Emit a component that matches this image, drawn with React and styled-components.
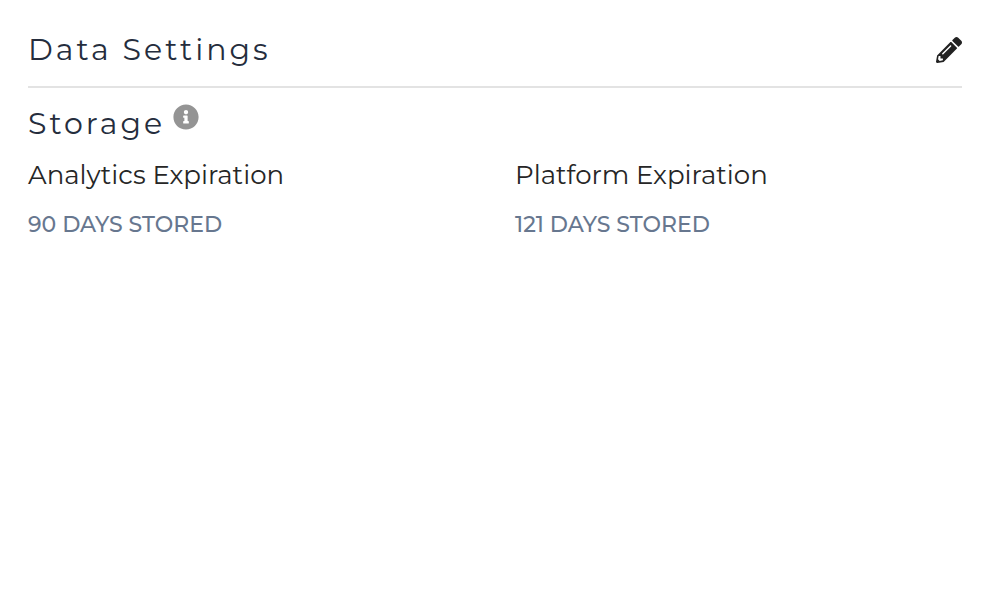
import React from "react";
import styled, { createGlobalStyle } from "styled-components";
import { FaInfoCircle, FaPencilAlt } from "react-icons/fa";

const settings = [
  { label: "Analytics Expiration", days: 90 },
  { label: "Platform Expiration", days: 121 },
];

const App = () => {
  return (
    <>
      <GlobalStyle />
      <DataSettingsWrapper>
        <Header>
          <Title>Data Settings</Title>
          <IconButton type="button" aria-label="Edit data settings">
            <FaPencilAlt size={26} />
          </IconButton>
        </Header>
        <SectionHeader>
          <Title as="h2">Storage</Title>
          <IconButton type="button" aria-label="About storage" $muted>
            <FaInfoCircle size={26} />
          </IconButton>
        </SectionHeader>
        <SettingList>
          {settings.map(({ label, days }) => (
            <div key={label}>
              <Label>{label}</Label>
              <Value>{days} days stored</Value>
            </div>
          ))}
        </SettingList>
      </DataSettingsWrapper>
    </>
  );
};

const GlobalStyle = createGlobalStyle`
  body {
    margin: 0;
    background: #fff;
    color: #262626;
    font-family: Montserrat, Inter, "Liberation Sans", sans-serif;
  }
`;

const DataSettingsWrapper = styled.main`
  padding: 30px 40px 30px 28px;
`;

const Header = styled.header`
  display: flex;
  align-items: center;
  justify-content: space-between;
  padding-bottom: 16px;
  border-bottom: 2px solid #e3e3e3;
`;

const SectionHeader = styled.div`
  display: flex;
  align-items: flex-start;
  gap: 8px;
  padding-top: 16px;
`;

const Title = styled.h1`
  margin: 0;
  color: #252d3d;
  font-size: 30px;
  font-weight: 400;
  line-height: 40px;
  letter-spacing: 3px;
`;

const IconButton = styled.button`
  display: flex;
  padding: 0;
  border: 0;
  background: none;
  color: ${({ $muted }) => ($muted ? "#949494" : "#222")};
  cursor: pointer;
`;

const SettingList = styled.dl`
  display: grid;
  grid-template-columns: repeat(2, 1fr);
  gap: 40px;
  margin: 12px 0 0;
`;

const Label = styled.dt`
  font-size: 26px;
  font-weight: 400;
  line-height: 38px;
`;

const Value = styled.dd`
  margin: 16px 0 0;
  color: #67778f;
  font-size: 22px;
  font-weight: 500;
  line-height: 30px;
  text-transform: uppercase;
`;

export default App;
